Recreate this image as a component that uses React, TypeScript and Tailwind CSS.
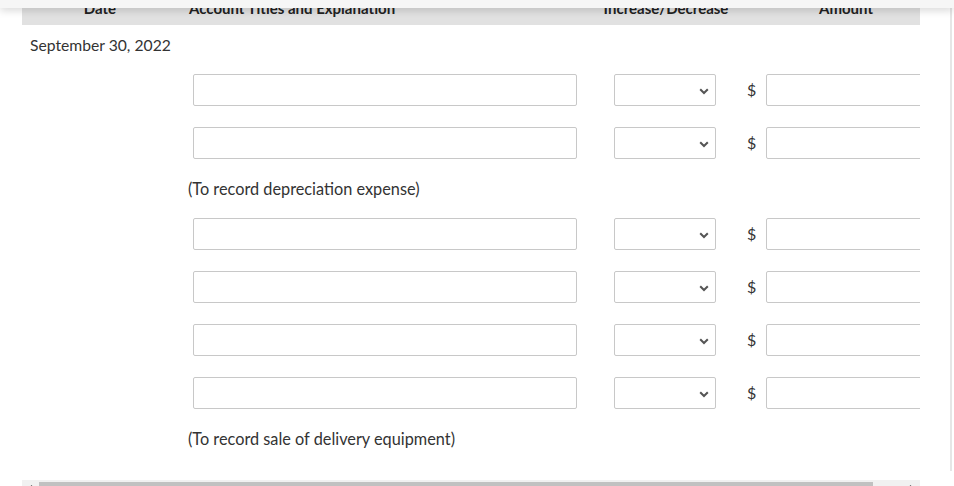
import React from "react";

function Chevron() {
  return (
    <svg width="10" height="7" viewBox="0 0 10 7" className="absolute right-[6px] top-[13px]">
      <path d="M1.2 1.2 L5 5 L8.8 1.2" fill="none" stroke="#555" strokeWidth="2" />
    </svg>
  );
}

function EntryRow() {
  return (
    <div className="flex h-[53px] items-center">
      <div className="w-[156px]" />
      <div className="w-[414px] px-[15px]">
        <div className="h-[32px] w-[384px] rounded-[2px] border border-[#c8c8c8] bg-white" />
      </div>
      <div className="w-[148px] pl-[22px]">
        <div className="relative h-[32px] w-[102px] rounded-[2px] border border-[#c8c8c8] bg-white">
          <Chevron />
        </div>
      </div>
      <div className="flex w-[212px] items-center">
        <span className="ml-[7px] w-[19px] text-[16px] text-[#333]">$</span>
        <div className="h-[32px] w-[190px] rounded-[2px] border border-[#c8c8c8] bg-white" />
      </div>
    </div>
  );
}

function Note({ text }: { text: string }) {
  return (
    <div className="flex h-[38px] items-center pt-[2px]">
      <div className="w-[166px]" />
      <span className="text-[16.3px] text-[#333]">{text}</span>
    </div>
  );
}

export default function App() {
  return (
    <div className="relative h-[486px] w-[954px] overflow-hidden bg-white font-['Lato',sans-serif]">
      <div className="h-[486px] w-[952px] border-r-2 border-[#e6e6e6]">
        <div className="-mt-[15px] ml-[22px] w-[898px] overflow-hidden">
          <div className="w-[930px]">
            <div className="flex h-[40px] items-center bg-[#e1e1e1] pt-[6px] text-[15px] font-bold text-[#222]">
              <div className="w-[156px] text-center">Date</div>
              <div className="w-[414px] pl-[11px]">Account Titles and Explanation</div>
              <div className="w-[148px] text-center">Increase/Decrease</div>
              <div className="w-[212px] text-center">Amount</div>
            </div>
            <div className="h-[38px] pl-[8px] pt-[11px] text-[15.7px] leading-[18px] text-[#333]">
              September 30, 2022
            </div>
            <EntryRow />
            <EntryRow />
            <Note text="(To record depreciation expense)" />
            <EntryRow />
            <EntryRow />
            <EntryRow />
            <EntryRow />
            <Note text="(To record sale of delivery equipment)" />
          </div>
          <div className="relative mt-[23px] h-[17px] w-[898px] bg-[#f1f1f1]">
            <div className="absolute left-[17px] top-[2px] h-[13px] w-[834px] bg-[#c1c1c1]" />
            <svg width="7" height="4" viewBox="0 0 7 4" className="absolute left-[6px] top-[5px]">
              <path d="M0 4 L3.5 0 L7 4 Z" fill="#505050" />
            </svg>
            <svg width="7" height="4" viewBox="0 0 7 4" className="absolute left-[885px] top-[5px]">
              <path d="M0 4 L3.5 0 L7 4 Z" fill="#505050" />
            </svg>
          </div>
        </div>
      </div>
      <div className="absolute left-0 right-0 top-0 h-[8px] bg-[#f6f6f6] shadow-[0_2px_8px_rgba(0,0,0,0.18)]" />
    </div>
  );
}
